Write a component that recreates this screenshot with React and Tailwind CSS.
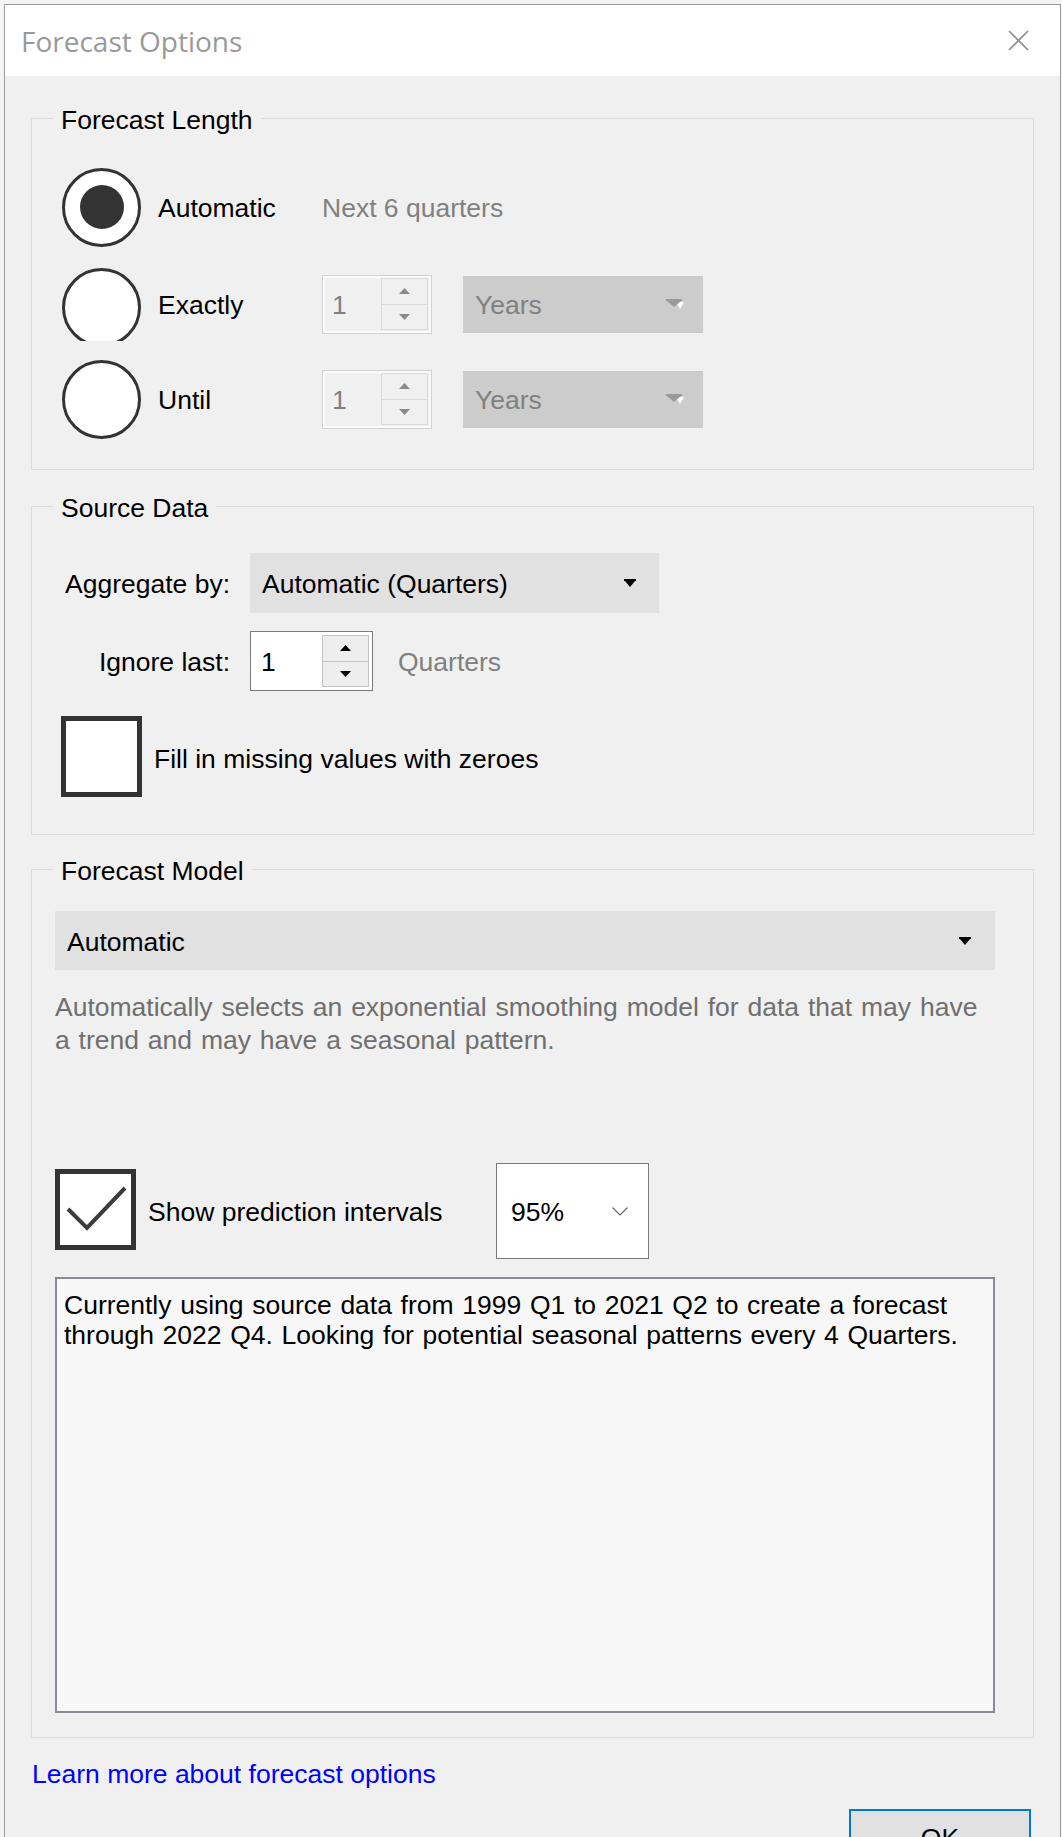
import React from 'react';

const Group = ({ title, className = '', children }) => (
  <fieldset className={`border border-[#dcdcdc] ${className}`}>
    <legend className="ml-[21px] px-[8px] pt-[4px] leading-[28px]">{title}</legend>
    {children}
  </fieldset>
);

const Radio = ({ checked }) => (
  <div className="w-[79px] h-[79px] shrink-0 rounded-full border-[3px] border-[#333] bg-white flex items-center justify-center">
    {checked && <div className="w-[44px] h-[44px] rounded-full bg-[#333]"></div>}
  </div>
);

const DropArrow = () => (
  <svg width="12" height="8" viewBox="0 0 12 8">
    <path d="M0 0h12v2H0z M1 2h10L6 8z" fill="#000" />
  </svg>
);

const DisabledArrow = () => (
  <svg width="19" height="11" viewBox="0 0 19 11">
    <path d="M10 3h8L14 10z" fill="#fff" />
    <path d="M0 0h16v2H0z M1 2h14L8 8z" fill="#9a9a9a" />
  </svg>
);

const Spin = ({ up, color }) => (
  <svg width="11" height="6" viewBox="0 0 11 6">
    <path d={up ? 'M0 6L5.5 0L11 6z' : 'M0 0L5.5 6L11 0z'} fill={color} />
  </svg>
);

const DisabledSpinner = () => (
  <div className="w-[110px] h-[59px] border border-[#d2d2d2] shadow-[inset_0_0_0_2px_#fafafa] bg-[#f0f0f0] flex items-center justify-between pl-[9px] pr-[3px] py-[3px]">
    <span className="pt-[4px] text-[#808080]">1</span>
    <div className="w-[47px] h-[52px] border border-[#dadada] flex flex-col">
      <div className="flex-1 flex items-center justify-center border-b border-[#dadada]">
        <Spin up color="#8a8a8a" />
      </div>
      <div className="flex-1 flex items-center justify-center">
        <Spin color="#8a8a8a" />
      </div>
    </div>
  </div>
);

const YearsBox = () => (
  <div className="ml-[31px] w-[240px] h-[57px] bg-[#cccccc] text-[#808080] flex items-center justify-between pl-[12px] pr-[18px]">
    <span className="pt-[4px]">Years</span>
    <DisabledArrow />
  </div>
);

const App = () => {
  return (
    <div className="w-[1062px] h-[1837px] overflow-hidden bg-[#f4f4f4] pt-[4px] pl-[4px] pr-[1px] font-['Liberation_Sans',Arial,sans-serif] text-[26.5px] text-black">
      <div className="border border-[#9d9d9d] bg-[#f0f0f0] h-[1900px]">
        {/* Title bar */}
        <div className="h-[71px] bg-white flex items-center justify-between pl-[16px] pr-[31px]">
          <span className="font-['Open_Sans',sans-serif] text-[28px] text-[#999999]">Forecast Options</span>
          <svg width="21" height="21" viewBox="0 0 21 21">
            <path d="M1 1L20 20M20 1L1 20" stroke="#8c8c8c" strokeWidth="1.6" />
          </svg>
        </div>

        <div className="px-[26px] pt-[26px]">
          {/* Forecast Length */}
          <Group title="Forecast Length">
            <div className="pl-[30px] pt-[29px] pb-[26px]">
              <div className="h-[88px] flex items-center">
                <div className="w-[260px] flex items-center gap-[17px]">
                  <Radio checked />
                  <span className="pt-[4px]">Automatic</span>
                </div>
                <span className="pt-[4px] text-[#808080]">Next 6 quarters</span>
              </div>
              <div className="mt-[9px] h-[88px] flex items-center">
                <div className="w-[260px] flex items-center gap-[17px]">
                  <div className="w-[79px] h-[73px] overflow-hidden">
                    <Radio />
                  </div>
                  <span className="pt-[4px]">Exactly</span>
                </div>
                <DisabledSpinner />
                <YearsBox />
              </div>
              <div className="mt-[7px] h-[88px] flex items-center">
                <div className="w-[260px] flex items-center gap-[17px]">
                  <Radio />
                  <span className="pt-[4px]">Until</span>
                </div>
                <DisabledSpinner />
                <YearsBox />
              </div>
            </div>
          </Group>

          {/* Source Data */}
          <Group title="Source Data" className="mt-[20px]">
            <div className="pl-[29px] pt-[31px] pb-[37px]">
              <div className="h-[60px] flex items-center">
                <span className="w-[189px] pt-[4px] text-right pr-[20px] whitespace-nowrap">Aggregate by:</span>
                <div className="w-[409px] h-[60px] bg-[#e1e1e1] flex items-center justify-between pl-[12px] pr-[23px]">
                  <span className="pt-[4px]">Automatic (Quarters)</span>
                  <DropArrow />
                </div>
              </div>
              <div className="mt-[18px] h-[60px] flex items-center">
                <span className="w-[189px] pt-[4px] text-right pr-[20px] whitespace-nowrap">Ignore last:</span>
                <div className="w-[123px] h-[60px] bg-white border border-[#7a7a7a] flex items-center justify-between pl-[10px] pr-[3px] py-[3px]">
                  <span className="pt-[4px]">1</span>
                  <div className="w-[47px] h-[52px] border border-[#c4c4c4] bg-[#eeeeee] flex flex-col">
                    <div className="flex-1 flex items-center justify-center border-b border-[#c4c4c4]">
                      <Spin up color="#000" />
                    </div>
                    <div className="flex-1 flex items-center justify-center">
                      <Spin color="#000" />
                    </div>
                  </div>
                </div>
                <span className="ml-[25px] pt-[4px] text-[#808080]">Quarters</span>
              </div>
              <div className="mt-[25px] flex items-center">
                <div className="w-[81px] h-[81px] border-[5px] border-[#333] bg-white"></div>
                <span className="ml-[12px] pt-[6px]">Fill in missing values with zeroes</span>
              </div>
            </div>
          </Group>

          {/* Forecast Model */}
          <Group title="Forecast Model" className="mt-[18px]">
            <div className="pl-[23px] pr-[38px] pt-[26px] pb-[24px]">
              <div className="h-[59px] bg-[#e1e1e1] flex items-center justify-between pl-[12px] pr-[24px]">
                <span className="pt-[4px]">Automatic</span>
                <DropArrow />
              </div>
              <p className="mt-[21px] leading-[33px] text-[#6f6f6f] whitespace-nowrap [word-spacing:1.5px]">
                Automatically selects an exponential smoothing model for data that may have
                <br />
                a trend and may have a seasonal pattern.
              </p>
              <div className="mt-[106px] h-[96px] flex items-start">
                <div className="mt-[6px] w-[81px] h-[81px] border-[5px] border-[#333] bg-white">
                  <svg width="71" height="71" viewBox="0 0 71 71">
                    <path d="M8 35L27 54L65 14" fill="none" stroke="#3c3c3c" strokeWidth="4" />
                  </svg>
                </div>
                <span className="ml-[12px] w-[348px] self-center pt-[4px] whitespace-nowrap">Show prediction intervals</span>
                <div className="w-[153px] h-[96px] bg-white border border-[#7a7a7a] flex items-center justify-between pl-[14px] pr-[20px]">
                  <span className="pt-[4px]">95%</span>
                  <svg width="16" height="9" viewBox="0 0 16 9">
                    <path d="M0.5 0.5L8 8L15.5 0.5" fill="none" stroke="#666" strokeWidth="1.2" />
                  </svg>
                </div>
              </div>
              <div className="mt-[18px] h-[436px] border-2 border-[#878b93] bg-[#f7f7f7] pl-[7px] pt-[11px] leading-[30px] whitespace-nowrap [word-spacing:1.3px]">
                Currently using source data from 1999 Q1 to 2021 Q2 to create a forecast
                <br />
                through 2022 Q4. Looking for potential seasonal patterns every 4 Quarters.
              </div>
            </div>
          </Group>

          <div className="mt-[21px] pl-[1px] leading-[30px] text-[#0000ff]">
            Learn more about forecast options
          </div>

          <div className="mt-[20px] flex justify-end pr-[3px]">
            <button className="w-[182px] h-[60px] border-2 border-[#0078d7] bg-[#e1e1e1] flex items-center justify-center">
              OK
            </button>
          </div>
        </div>
      </div>
    </div>
  );
};

export default App;
